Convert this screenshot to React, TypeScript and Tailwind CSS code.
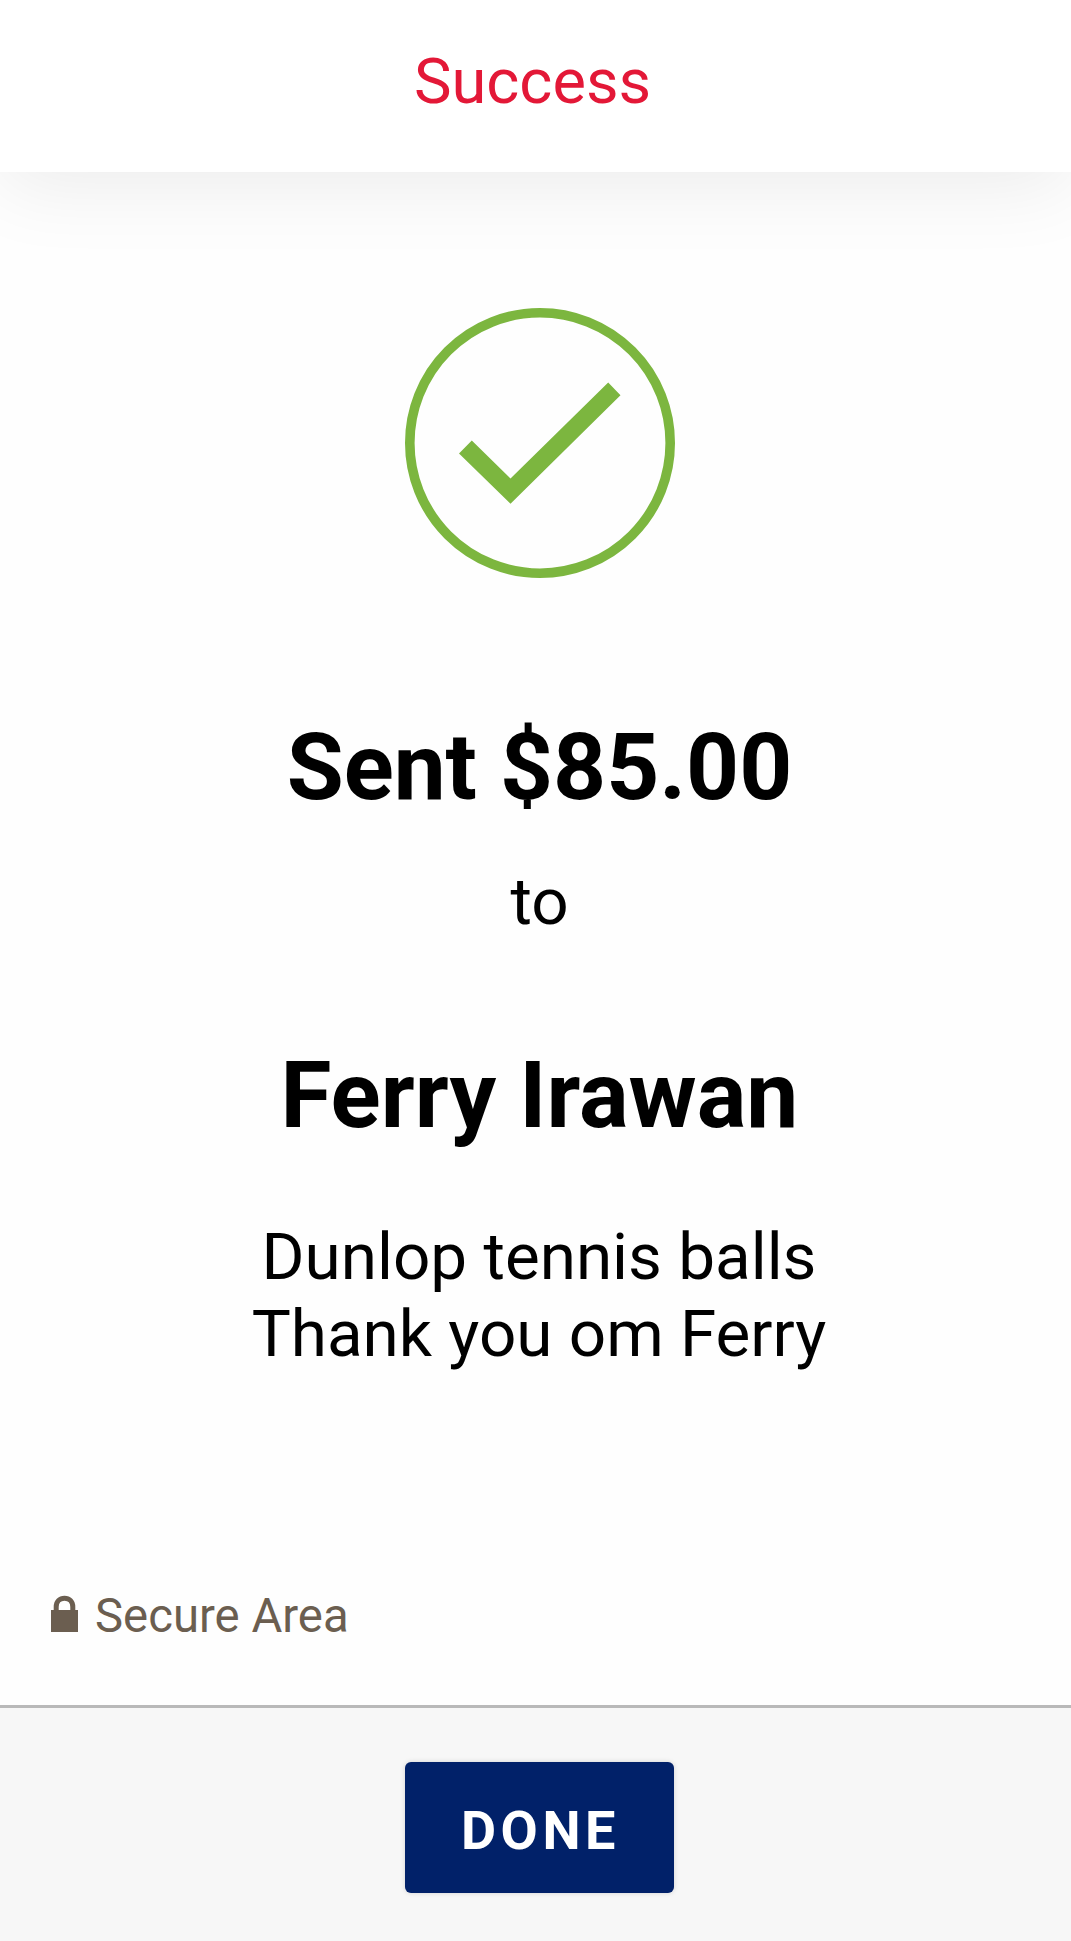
import { useState } from 'react'

function Header({ title }: { title: string }) {
  return (
    <header className="relative flex h-[172px] shrink-0 justify-center bg-white pr-[6px] shadow-[0_14px_80px_rgba(0,0,0,0.075)]">
      <h1 className="pt-[44px] text-[63.2px] leading-[75px] font-normal text-[#e31837]">{title}</h1>
    </header>
  )
}

function SuccessIcon() {
  return (
    <svg viewBox="0 0 270 270" className="h-[270px] w-[270px]" fill="none">
      <circle cx="135" cy="135" r="130.2" stroke="#7cb63f" strokeWidth="9.6" />
      <path d="M54 145.400 L66.800 132.600 L105.500 170.500 L203.200 74.600 L215.500 87.200 L105.500 195.700 Z" fill="#7cb63f" />
    </svg>
  )
}

function LockIcon() {
  return (
    <svg viewBox="0 0 27 37" className="mt-[13px] h-[37px] w-[27px]" fill="none">
      <path d="M5.200 16V12c0-5.500 3.500-8.700 8.300-8.700s8.300 3.200 8.300 8.700V16" stroke="#6b5e50" strokeWidth="5" />
      <rect y="15" width="27" height="22" fill="#6b5e50" />
    </svg>
  )
}

export default function App() {
  const [done, setDone] = useState(false)
  const note = ['Dunlop tennis balls', 'Thank you om Ferry']

  return (
    <div className="flex h-[1941px] w-full flex-col overflow-hidden bg-[#fefefe] font-['Roboto',sans-serif] text-black">
      <Header title="Success" />

      <main className="flex flex-1 flex-col items-center pt-[136px] pl-[8px]">
        <SuccessIcon />
        <p className="mt-[136px] text-[92.6px] leading-[108px] font-bold">Sent $85.00</p>
        <p className="mt-[42px] text-[65.6px] leading-[76px]">to</p>
        <p className="mt-[102px] text-[92.8px] leading-[108px] font-bold">Ferry Irawan</p>
        <div className="mt-[68px] mr-[1px] text-center text-[65.6px] leading-[77px]">
          {note.map((line) => (
            <p key={line}>{line}</p>
          ))}
        </div>
      </main>

      <div className="flex h-[124px] shrink-0 items-start gap-[17px] pt-[1px] pl-[51px]">
        <LockIcon />
        <span className="pt-[6px] text-[47.3px] leading-[56px] text-[#6b5e50]">Secure Area</span>
      </div>

      <footer className="flex h-[236px] shrink-0 justify-center border-t-[3px] border-[#b9b9b9] bg-[#f7f7f7] pt-[54px] pl-[8px]">
        <button
          type="button"
          disabled={done}
          onClick={() => setDone(true)}
          className="h-[131px] w-[269px] rounded-[6px] bg-[#012169] pt-[5px] pl-[2px] text-[54px] font-bold tracking-[4.6px] text-white shadow-[0_0_5px_rgba(0,0,0,0.15)]"
        >
          DONE
        </button>
      </footer>
    </div>
  )
}
